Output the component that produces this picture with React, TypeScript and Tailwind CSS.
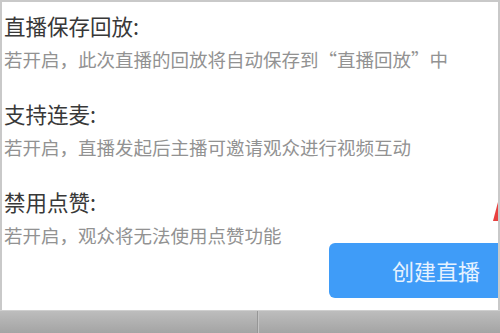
const sections = [
  {
    title: "直播保存回放:",
    desc: "若开启，此次直播的回放将自动保存到“直播回放”中",
  },
  {
    title: "支持连麦:",
    desc: "若开启，直播发起后主播可邀请观众进行视频互动",
  },
  {
    title: "禁用点赞:",
    desc: "若开启，观众将无法使用点赞功能",
  },
];

export default function App() {
  return (
    <div
      className="relative flex h-[333px] w-[500px] flex-col overflow-hidden bg-[#a9a9a9]"
      style={{ fontFamily: '"Noto Sans CJK SC", "Noto Sans", sans-serif' }}
    >
      {/* dialog body */}
      <div className="flex h-[310px] flex-col border-l-2 border-r-2 border-t-2 border-[#c9c9c9] bg-white pl-[2px] pt-[11px]">
        <div className="flex flex-col gap-[31px]">
          {sections.map((s) => (
            <div key={s.title} className="flex flex-col">
              <div className="h-[25px] text-[21.5px] leading-[25px] text-[#383838]">{s.title}</div>
              <div className="mt-[11px] h-[21px] whitespace-nowrap text-[18.5px] leading-[21px] text-[#929292]">
                {s.desc}
              </div>
            </div>
          ))}
        </div>
        <div className="-mt-[3px] flex justify-end">
          <button className="h-[55px] w-[169px] rounded-l-[6px] bg-[#3f9cf8] pl-[63px] text-left text-[22px] text-[#e6f2ff]">
            创建直播
          </button>
        </div>
      </div>

      {/* window frame strip */}
      <div className="flex h-[23px] border-t border-[#cfcfcf] bg-gradient-to-b from-[#bdbdbd] to-[#a4a4a4]">
        <div className="w-[258px] border-r border-[#969696]" />
        <div className="flex-1 border-l border-[#c4c4c4]" />
      </div>

      {/* annotation arrow tip */}
      <svg className="absolute left-[490px] top-[200px]" width="10" height="24" viewBox="0 0 10 24">
        <polygon points="8,2 3,21 8,21" fill="#e8403f" />
      </svg>
    </div>
  );
}
